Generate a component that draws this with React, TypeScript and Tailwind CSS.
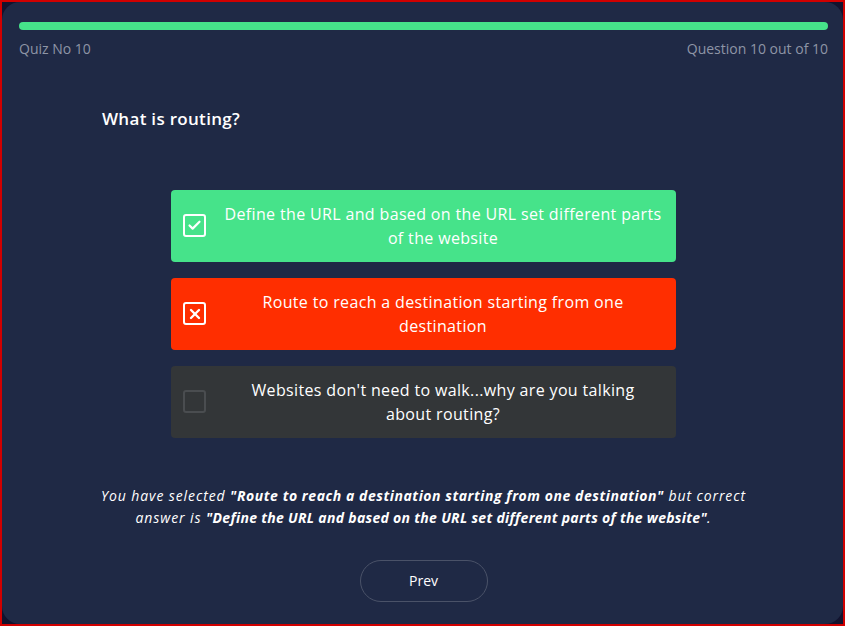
import { Check, X } from "lucide-react";

type Option = { lines: string[]; state: "correct" | "wrong" | "idle" };

const OPTIONS: Option[] = [
  { lines: ["Define the URL and based on the URL set different parts", "of the website"], state: "correct" },
  { lines: ["Route to reach a destination starting from one", "destination"], state: "wrong" },
  { lines: ["Websites don't need to walk...why are you talking", "about routing?"], state: "idle" },
];

function OptionRow({ option }: { option: Option }) {
  const bg =
    option.state === "correct"
      ? "bg-[#46e38a]"
      : option.state === "wrong"
        ? "bg-[#ff2e00]"
        : "bg-[#333638]";
  return (
    <div className={`flex items-center h-[72px] rounded-[4px] pl-[12px] ${bg}`}>
      <div
        className={`w-[23px] h-[23px] shrink-0 rounded-[3px] border-2 flex items-center justify-center ${
          option.state === "idle" ? "border-[#4a4d50]" : "border-white"
        }`}
      >
        {option.state === "correct" && <Check size={15} strokeWidth={3.5} className="text-white" />}
        {option.state === "wrong" && <X size={16} strokeWidth={3.5} className="text-white" />}
      </div>
      <p className="flex-1 text-center text-white text-[16px] leading-[24px] tracking-[0.35px] pl-1 whitespace-nowrap">
        {option.lines[0]}
        <br />
        {option.lines[1]}
      </p>
    </div>
  );
}

export default function App() {
  return (
    <div
      className="h-[626px] w-full bg-[#12132e] border-2 border-[#d00000] overflow-hidden"
      style={{ fontFamily: "'Open Sans', sans-serif" }}
    >
      <div className="h-full rounded-[18px] bg-[#1f2945] pl-[17px] pr-[15px] pt-[20px] flex flex-col">
        <div className="h-[8px] rounded-full bg-[#46e38a]" />
        <div className="flex justify-between mt-[8px] text-[14px] text-[#8e95a6]">
          <span>Quiz No 10</span>
          <span>Question 10 out of 10</span>
        </div>
        <h2 className="mt-[47px] ml-[83px] text-white text-[17px] font-semibold tracking-[0.3px]">What is routing?</h2>
        <div className="mt-[58px] mx-auto w-[505px] flex flex-col gap-4">
          {OPTIONS.map((o) => (
            <OptionRow key={o.lines[0]} option={o} />
          ))}
        </div>
        <p className="mt-[47px] mx-auto w-[680px] text-center italic text-[14px] leading-[22px] tracking-[0.9px] text-white">
          You have selected{" "}
          <b className="font-bold tracking-[0.55px]">"Route to reach a destination starting from one destination"</b> but
          correct
          <br />
          answer is <b className="font-bold tracking-[0.3px]">"Define the URL and based on the URL set different parts of the website"</b>.
        </p>
        <button className="mt-[31px] mx-auto w-[128px] h-[42px] rounded-full border border-[#4a5268] text-white text-[14px] font-medium">
          Prev
        </button>
      </div>
    </div>
  );
}
